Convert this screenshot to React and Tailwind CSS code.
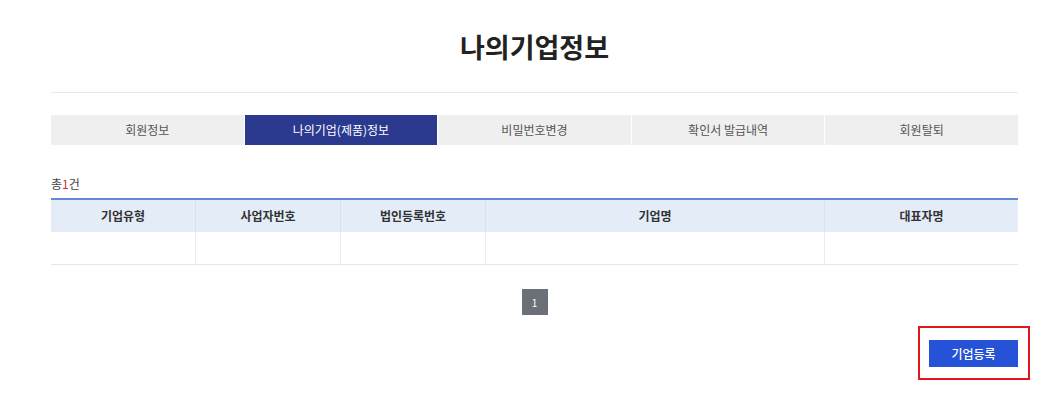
export default function App() {
  const tabs = ['회원정보', '나의기업(제품)정보', '비밀번호변경', '확인서 발급내역', '회원탈퇴'];
  const cols = [
    { label: '기업유형', w: 'w-[145px]' },
    { label: '사업자번호', w: 'w-[145px]' },
    { label: '법인등록번호', w: 'w-[145px]' },
    { label: '기업명', w: 'w-[339px]' },
    { label: '대표자명', w: 'flex-1' },
  ];

  return (
    <div className="w-[1062px] h-[402px] bg-white overflow-hidden font-['Noto_Sans_CJK_KR','Noto_Sans',sans-serif] text-[#333]">
      <div className="ml-[51px] w-[967px]">
        {/* Title */}
        <h1 className="pt-[28px] h-[93px] border-b border-[#e8e8e8] text-center text-[27px] font-bold leading-[38px] text-[#222]">
          나의기업정보
        </h1>

        {/* Tabs */}
        <div className="mt-[22px] flex h-[30px] gap-px">
          {tabs.map((t, i) => (
            <div
              key={t}
              className={
                i === 1
                  ? 'flex-1 flex items-center justify-center bg-[#2b3a8f] text-white text-[12px]'
                  : 'flex-1 flex items-center justify-center bg-[#efefef] text-[#555] text-[12px]'
              }
            >
              {t}
            </div>
          ))}
        </div>

        {/* Count */}
        <div className="mt-[30px] text-[12px] leading-[18px] text-[#444]">
          총<span className="text-[#c8302e]">1</span>건
        </div>

        {/* Table */}
        <div className="mt-[5px] border-t-2 border-[#6289d8]">
          <div className="flex h-[32px] bg-[#e4ecf8]">
            {cols.map((c, i) => (
              <div
                key={c.label}
                className={`${c.w} flex items-center justify-center text-[12px] font-bold text-[#333] ${i < cols.length - 1 ? 'border-r border-[#d7e0ee]' : ''}`}
              >
                {c.label}
              </div>
            ))}
          </div>
          <div className="flex h-[33px] border-b border-[#e6e6e6]">
            {cols.map((c, i) => (
              <div
                key={c.label}
                className={`${c.w} ${i < cols.length - 1 ? 'border-r border-[#ececec]' : ''}`}
              />
            ))}
          </div>
        </div>

        {/* Pagination */}
        <div className="mt-[24px] flex justify-center">
          <div className="w-[26px] h-[26px] bg-[#6b6f77] text-white text-[10px] flex items-center justify-center">
            1
          </div>
        </div>

        {/* Register button */}
        <div className="mt-[11px] flex justify-end mr-[-12px]">
          <div className="border-2 border-[#e3161e] pt-[12px] pb-[11px] pl-[9px] pr-[10px]">
            <button className="w-[89px] h-[27px] bg-[#2552d6] text-white text-[12px] font-medium flex items-center justify-center">
              기업등록
            </button>
          </div>
        </div>
      </div>
    </div>
  );
}
